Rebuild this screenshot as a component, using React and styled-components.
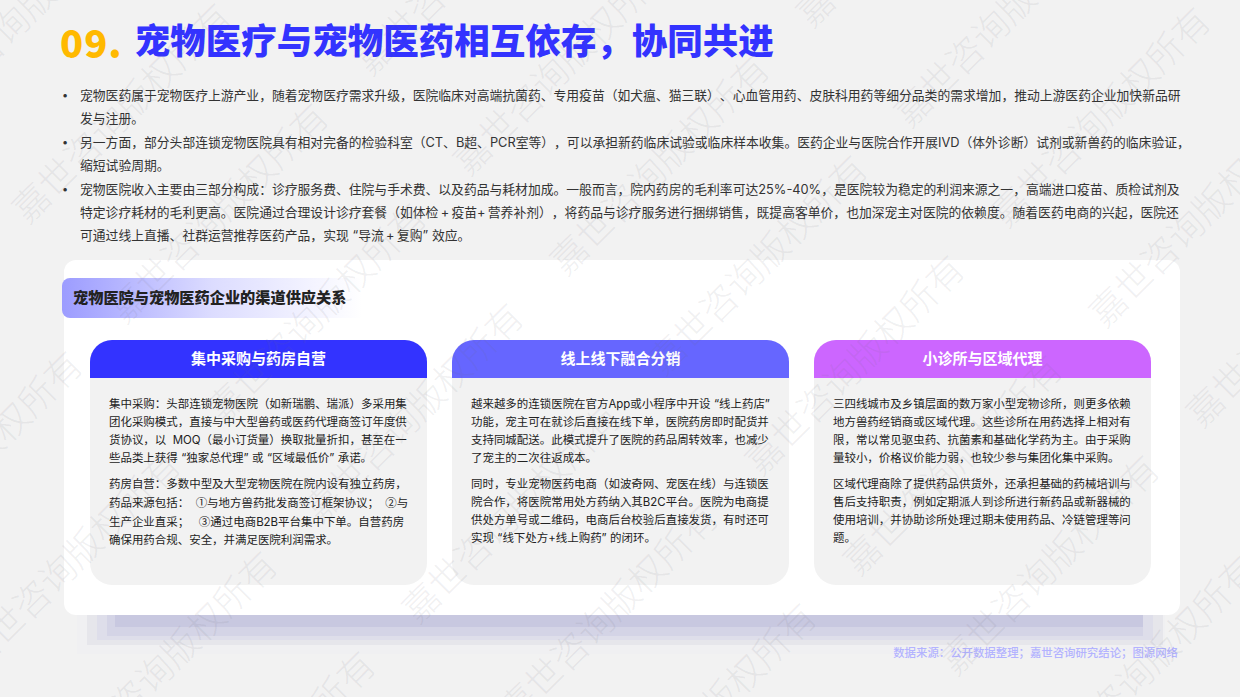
import React from 'react';
import styled, { createGlobalStyle } from 'styled-components';

const GlobalStyle = createGlobalStyle`
    html, body {
        margin: 0;
        padding: 0;
        background: #f2f2f2;
    }
    * {
        box-sizing: border-box;
    }
`;

const cjk = `"Noto Sans CJK SC", "Noto Sans", sans-serif`;
const font = `"Inter", ${cjk}`;

const Page = styled.div`
    position: relative;
    width: 1240px;
    height: 697px;
    overflow: hidden;
    background: #f2f2f2;
    padding: 19px 54px 0 60px;
    font-family: ${font};
    text-spacing-trim: space-all;
`;

const Title = styled.h1`
    margin: 0;
    display: flex;
    align-items: center;
    gap: 12px;
    height: 46px;
    font-size: 35.5px;
    line-height: 46px;
    font-weight: 900;
    color: #3333ff;
    white-space: nowrap;
`;

const Number = styled.span`
    font-family: ${cjk};
    color: #ffb900;
    font-size: 38px;
    letter-spacing: 1px;
`;

const Bullets = styled.ul`
    list-style: none;
    margin: 19px 0 0;
    padding: 0 0 0 20px;
    font-size: 12.8px;
    line-height: 23.4px;
    color: #333;
`;

const Bullet = styled.li`
    position: relative;
    &::before {
        content: "•";
        position: absolute;
        left: -18px;
        top: 0;
        font-size: 11px;
    }
`;

const Line = styled.span`
    display: block;
    white-space: nowrap;
`;

const OpenQuote = styled.span`
    padding-left: 0.3em;
`;

const CloseQuote = styled.span`
    padding-right: 0.3em;
`;

const Circled = styled.span`
    font-family: ${cjk};
`;

const Panel = styled.section`
    width: 1116px;
    height: 355px;
    margin: 12px 0 0 4px;
    padding-top: 18px;
    background: #fff;
    border-radius: 12px;
    box-shadow:
        7px 56px 0 -44px #c8c8e0,
        3px 61px 0 -40px #d4d4e6,
        3px 55px 0 -30px #dedeea,
        3px 50px 0 -20px #e6e6eb,
        -1px 53px 0 -14px #f0f0f2;
`;

const PanelHead = styled.h2`
    margin: 0 0 0 -2px;
    width: 300px;
    height: 40px;
    padding-left: 11px;
    border-radius: 8px 0 0 8px;
    background: linear-gradient(90deg, #9c9cff 0%, #dcdcff 50%, #ffffff 100%);
    font-size: 15.2px;
    line-height: 40px;
    font-weight: 900;
    color: #222;
    white-space: nowrap;
`;

const Cards = styled.div`
    display: grid;
    grid-template-columns: repeat(3, 337px);
    gap: 25px;
    margin: 22px 0 0 26px;
`;

const Card = styled.article`
    height: 245px;
    background: #f2f2f2;
    border-radius: 22px;
    overflow: hidden;
`;

const CardHead = styled.h3`
    margin: 0;
    height: 38px;
    background: ${(p) => p.$color};
    color: #fff;
    font-size: 15px;
    line-height: 38px;
    font-weight: 700;
    text-align: center;
`;

const CardBody = styled.div`
    padding: 17px 14px 0 19px;
    font-size: 11.46px;
    line-height: 18px;
    color: #222;
    p {
        margin: 0 0 8px;
    }
`;

const Source = styled.div`
    position: relative;
    margin: 29px 8px 0 0;
    text-align: right;
    font-size: 11.4px;
    line-height: 18px;
    font-weight: 500;
    color: #b3b3ff;
`;

const Mark = styled.div.attrs((p) => ({
    style: { left: p.$x, top: p.$y },
}))`
    position: absolute;
    transform-origin: left center;
    transform: translateY(-50%) rotate(-45deg);
    font-size: 36.4px;
    line-height: 1;
    font-weight: 300;
    color: rgba(110, 110, 120, 0.1);
    white-space: nowrap;
    pointer-events: none;
`;

// watermark repeats on a skewed grid, measured from the first character
const marks = [];
for (let i = -3; i < 4; i++) {
    for (let j = -10; j < 5; j++) {
        const x = 960 + i * 246 + j * 97.5 - 13;
        const y = 655 - i * 248 + j * 100 + 13;
        if (x > -260 && x < 1260 && y > -20 && y < 960) marks.push({ x, y });
    }
}

// quotes and circled numbers need a bit of help next to the latin font
const richText = (text) =>
    text.split(/([“”①②③])/).map((part, i) => {
        if (part === '“') return <OpenQuote key={i}>{part}</OpenQuote>;
        if (part === '”') return <CloseQuote key={i}>{part}</CloseQuote>;
        if ('①②③'.includes(part) && part) return <Circled key={i}>{part}</Circled>;
        return part;
    });

const bullets = [
    [
        '宠物医药属于宠物医疗上游产业，随着宠物医疗需求升级，医院临床对高端抗菌药、专用疫苗（如犬瘟、猫三联）、心血管用药、皮肤科用药等细分品类的需求增加，推动上游医药企业加快新品研',
        '发与注册。',
    ],
    [
        '另一方面，部分头部连锁宠物医院具有相对完备的检验科室（CT、B超、PCR室等），可以承担新药临床试验或临床样本收集。医药企业与医院合作开展IVD（体外诊断）试剂或新兽药的临床验证，',
        '缩短试验周期。',
    ],
    [
        '宠物医院收入主要由三部分构成：诊疗服务费、住院与手术费、以及药品与耗材加成。一般而言，院内药房的毛利率可达25%-40%，是医院较为稳定的利润来源之一，高端进口疫苗、质检试剂及',
        '特定诊疗耗材的毛利更高。医院通过合理设计诊疗套餐（如体检\u2009+\u2009疫苗+\u2009营养补剂），将药品与诊疗服务进行捆绑销售，既提高客单价，也加深宠主对医院的依赖度。随着医药电商的兴起，医院还',
        '可通过线上直播、社群运营推荐医药产品，实现“导流\u2009+\u2009复购”效应。',
    ],
];

const cards = [
    {
        title: '集中采购与药房自营',
        color: '#3333ff',
        text: [
            '集中采购：头部连锁宠物医院（如新瑞鹏、瑞派）多采用集团化采购模式，直接与中大型兽药或医药代理商签订年度供货协议，以 \u00a0MOQ（最小订货量）换取批量折扣，甚至在一些品类上获得“独家总代理”或“区域最低价”承诺。',
            '药房自营：多数中型及大型宠物医院在院内设有独立药房，药品来源包括： \u00a0①与地方兽药批发商签订框架协议； \u00a0②与生产企业直采； \u00a0\u00a0③通过电商B2B平台集中下单。自营药房确保用药合规、安全，并满足医院利润需求。',
        ],
    },
    {
        title: '线上线下融合分销',
        color: '#6666ff',
        text: [
            '越来越多的连锁医院在官方App或小程序中开设“线上药店”功能，宠主可在就诊后直接在线下单，医院药房即时配货并支持同城配送。此模式提升了医院的药品周转效率，也减少了宠主的二次往返成本。',
            '同时，专业宠物医药电商（如波奇网、宠医在线）与连锁医院合作，将医院常用处方药纳入其B2C平台。医院为电商提供处方单号或二维码，电商后台校验后直接发货，有时还可实现“线下处方+线上购药”的闭环。',
        ],
    },
    {
        title: '小诊所与区域代理',
        color: '#cc66ff',
        text: [
            '三四线城市及乡镇层面的数万家小型宠物诊所，则更多依赖地方兽药经销商或区域代理。这些诊所在用药选择上相对有限，常以常见驱虫药、抗菌素和基础化学药为主。由于采购量较小，价格议价能力弱，也较少参与集团化集中采购。',
            '区域代理商除了提供药品供货外，还承担基础的药械培训与售后支持职责，例如定期派人到诊所进行新药品或新器械的使用培训，并协助诊所处理过期未使用药品、冷链管理等问题。',
        ],
    },
];

export default function App() {
    return (
        <Page lang="zh-CN">
            <GlobalStyle />
            <Title>
                <Number>09.</Number>
                宠物医疗与宠物医药相互依存，协同共进
            </Title>
            <Bullets>
                {bullets.map((lines) => (
                    <Bullet key={lines[0]}>
                        {lines.map((l) => (
                            <Line key={l}>{richText(l)}</Line>
                        ))}
                    </Bullet>
                ))}
            </Bullets>
            <Panel>
                <PanelHead>宠物医院与宠物医药企业的渠道供应关系</PanelHead>
                <Cards>
                    {cards.map((card) => (
                        <Card key={card.title}>
                            <CardHead $color={card.color}>{card.title}</CardHead>
                            <CardBody>
                                {card.text.map((t) => (
                                    <p key={t}>{richText(t)}</p>
                                ))}
                            </CardBody>
                        </Card>
                    ))}
                </Cards>
            </Panel>
            <Source>数据来源：公开数据整理；嘉世咨询研究结论；图源网络</Source>
            {marks.map((m) => (
                <Mark key={`${m.x}-${m.y}`} $x={m.x} $y={m.y}>
                    嘉世咨询版权所有
                </Mark>
            ))}
        </Page>
    );
}
